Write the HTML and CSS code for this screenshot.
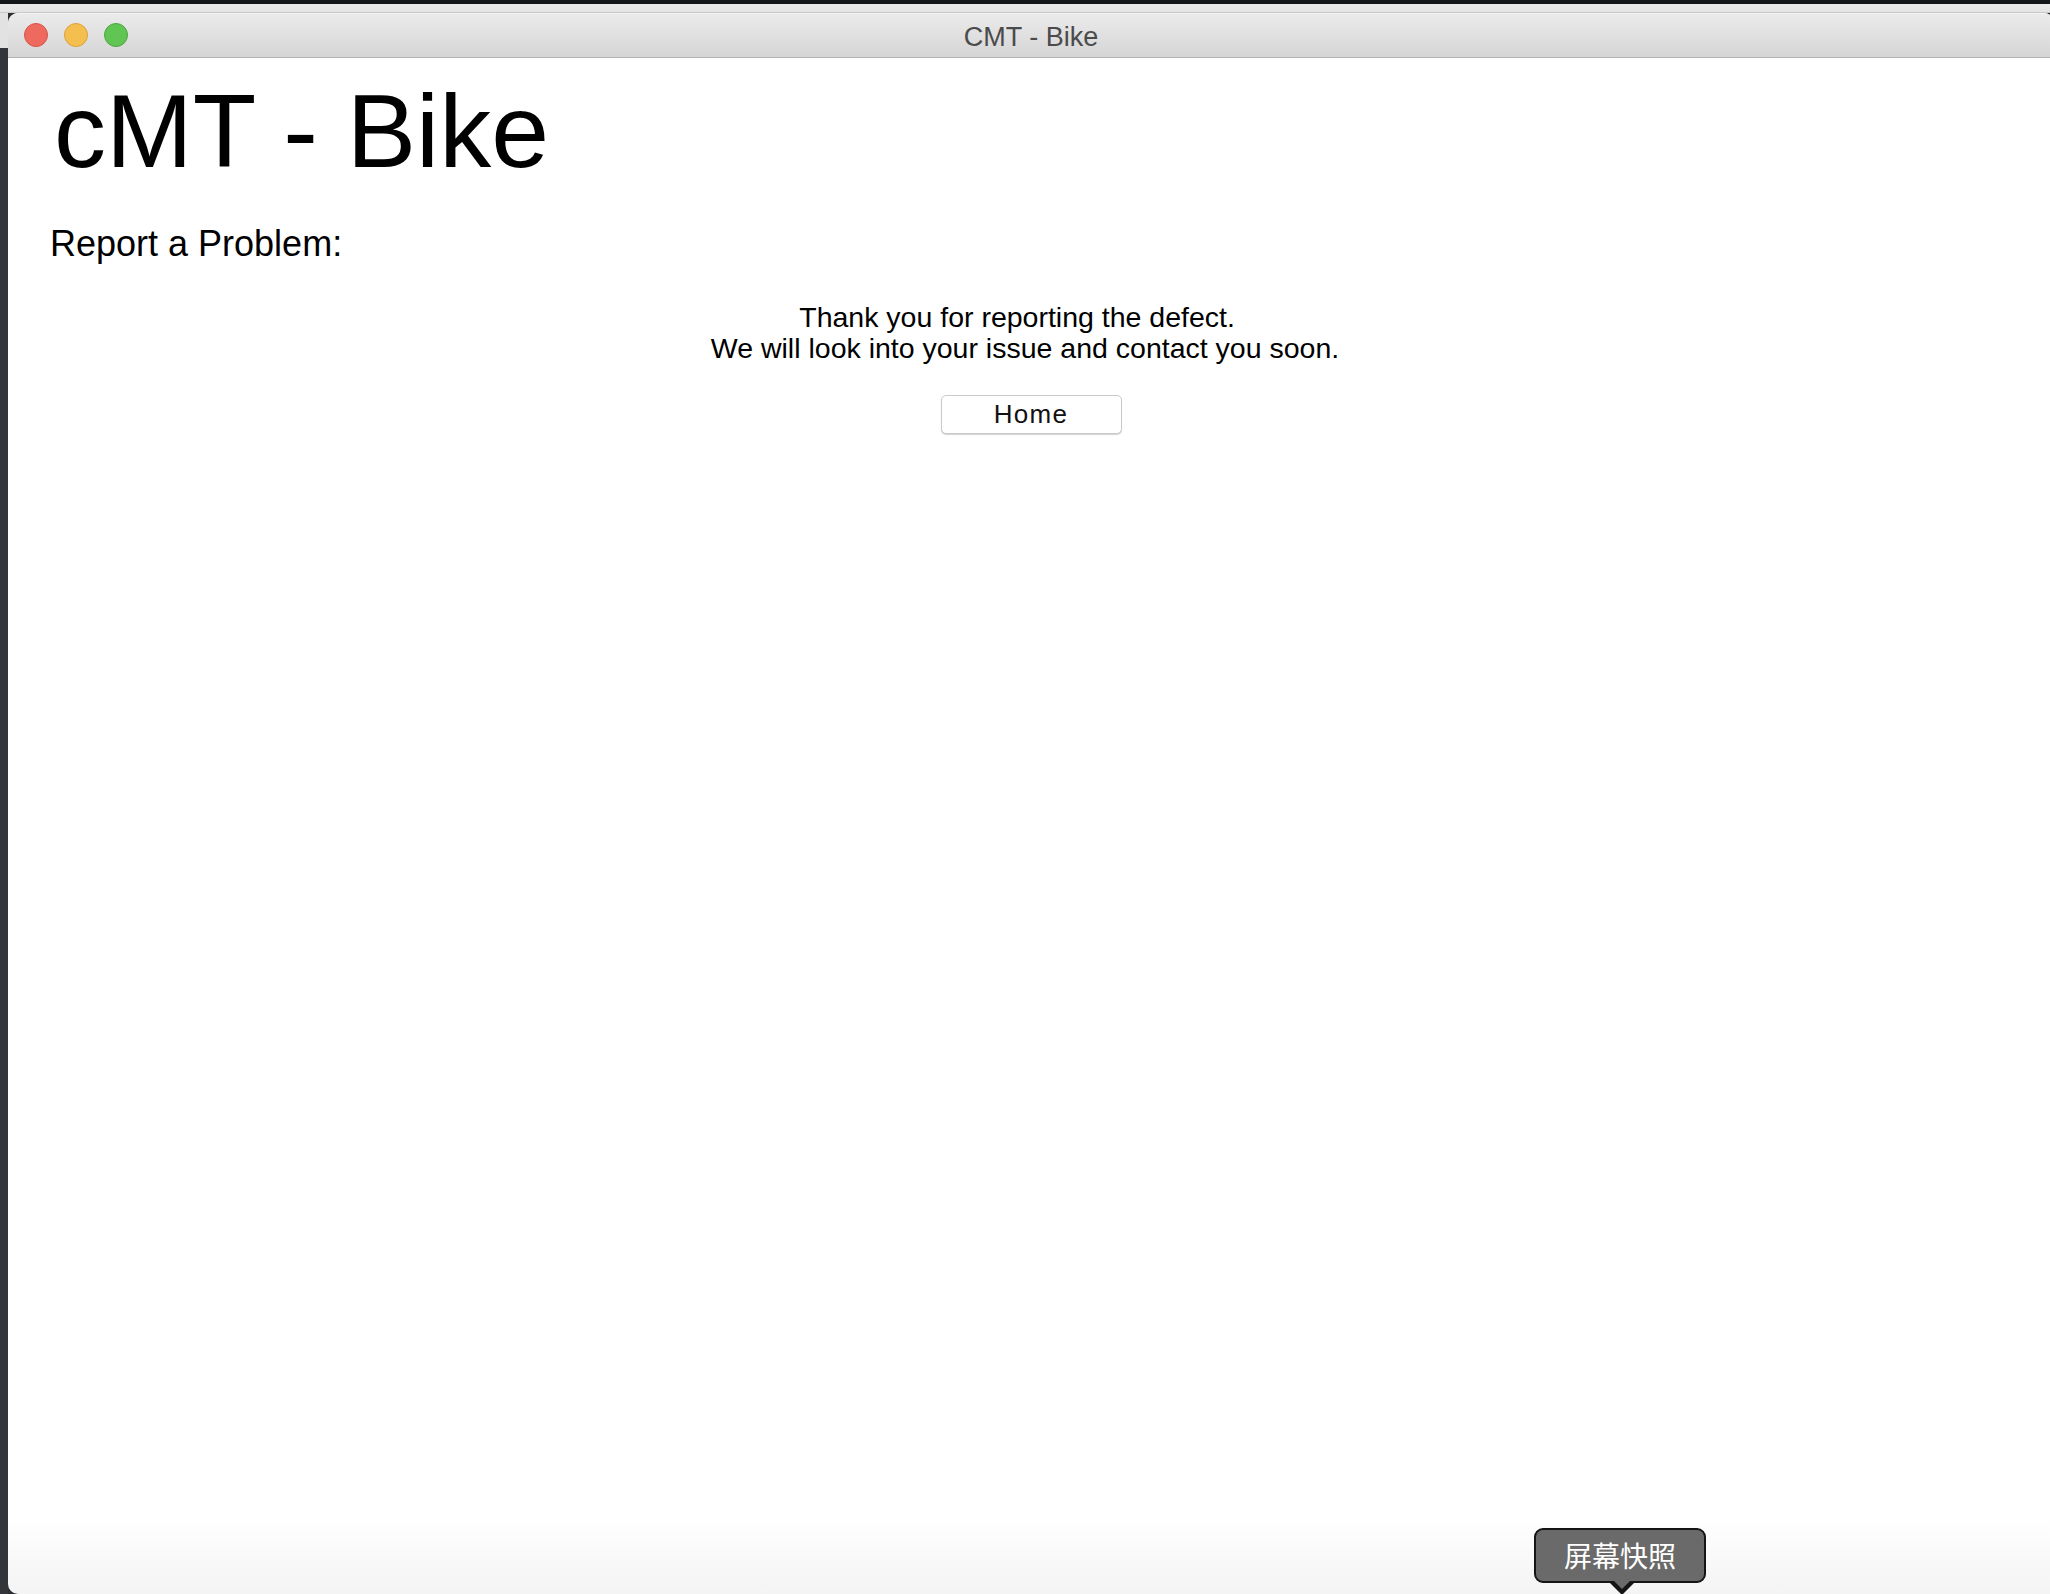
FILE: index.html
```html
<!DOCTYPE html>
<html lang="en">
<head>
<meta charset="utf-8">
<title>CMT - Bike</title>
<link rel="stylesheet" href="styles.css">
</head>
<body>
<div class="desk-top"></div>
<div class="desk-row">
  <div class="left-strip"></div>
  <div class="window">
    <div class="titlebar">
      <div class="lights">
        <span class="light red"></span>
        <span class="light yellow"></span>
        <span class="light green"></span>
      </div>
      <div class="title">CMT - Bike</div>
    </div>
    <div class="content">
      <h1 class="brand">cMT - Bike</h1>
      <h2 class="section">Report a Problem:</h2>
      <p class="message">Thank you for reporting the defect.&nbsp;&nbsp;<br>We will look into your issue and contact you soon.</p>
      <div class="actions"><button class="btn" type="button">Home</button></div>
    </div>
    <div class="bottom-fade"></div>
    <div class="tooltip">屏幕快照<span class="tip-arrow"></span></div>
  </div>
</div>
</body>
</html>
```
FILE: styles.css
```css
html, body {
  margin: 0;
  padding: 0;
  height: 100%;
  overflow: hidden;
}
body {
  background: #2d2e31;
  display: flex;
  flex-direction: column;
  font-family: "Liberation Sans", Arial, sans-serif;
}
.desk-top {
  height: 13px;
  flex: 0 0 13px;
  background: linear-gradient(#15161a 0, #15161a 4px, #e9e9e9 4px, #e4e4e4 12px, #c9c9c9 12px);
}
.desk-row {
  flex: 1;
  display: flex;
  min-height: 0;
}
.left-strip {
  width: 8px;
  flex: 0 0 8px;
  background: linear-gradient(#e2e2e2 0, #e2e2e2 35px, #34353a 35px);
}
.window {
  position: relative;
  flex: 0 0 2046px;
  background: #ffffff;
  border-radius: 10px 10px 0 10px;
  overflow: hidden;
  display: flex;
  flex-direction: column;
}
.titlebar {
  position: relative;
  height: 45px;
  flex: 0 0 45px;
  box-sizing: border-box;
  background: linear-gradient(#ebebeb, #d5d5d5);
  border-top: 1px solid #f4f4f4;
  border-bottom: 1px solid #b4b4b4;
  display: flex;
  align-items: center;
  justify-content: center;
}
.lights {
  position: absolute;
  left: 16px;
  top: 9px;
  display: flex;
  gap: 16px;
}
.light {
  width: 24px;
  height: 24px;
  border-radius: 50%;
  box-sizing: border-box;
}
.red { background: #ee6a5e; border: 1px solid #d65446; }
.yellow { background: #f5bf4f; border: 1px solid #d9a13c; }
.green { background: #61c554; border: 1px solid #4ea53f; }
.title {
  font-family: "Liberation Sans", Arial, sans-serif;
  font-size: 27px;
  color: #4b4b4b;
  margin-left: 0;
  margin-top: 3px;
}
.content {
  padding: 21px 0 0 46px;
  flex: 1;
}
.brand {
  margin: 0;
  font-weight: normal;
  font-size: 104px;
  line-height: 104px;
  color: #000;
}
.section {
  margin: 43px 0 0 -4px;
  font-weight: normal;
  font-size: 36px;
  line-height: 36px;
  color: #000;
}
.message {
  margin: 40px 0 0 -46px;
  padding-right: 12px;
  text-align: center;
  font-size: 28.5px;
  line-height: 31px;
  color: #000;
}
.actions {
  margin: 31px 0 0 -46px;
  display: flex;
  justify-content: center;
}
.btn {
  width: 181px;
  height: 39px;
  box-sizing: border-box;
  background: #ffffff;
  border: 1px solid #cacaca;
  border-radius: 5px;
  box-shadow: 0 1px 1px rgba(0,0,0,0.18);
  font-family: "Liberation Sans", Arial, sans-serif;
  font-size: 26px;
  letter-spacing: 1.3px;
  color: #111;
  padding: 0;
  margin-left: 0;
}
.bottom-fade {
  position: absolute;
  left: 0;
  right: 0;
  bottom: 0;
  height: 80px;
  background: linear-gradient(rgba(0,0,0,0), rgba(0,0,0,0.045));
  pointer-events: none;
}
.tooltip {
  position: absolute;
  left: 1526px;
  top: 1515px;
  width: 172px;
  height: 55px;
  box-sizing: border-box;
  background: #6a6a6a;
  border: 2px solid #151515;
  border-radius: 9px;
  color: #ffffff;
  font-family: "Noto Sans CJK SC", sans-serif;
  font-size: 28px;
  line-height: 50px;
  text-align: center;
  letter-spacing: 0;
}
.tip-arrow {
  position: absolute;
  left: 72px;
  bottom: -14px;
  width: 0;
  height: 0;
  border-left: 14px solid transparent;
  border-right: 14px solid transparent;
  border-top: 14px solid #151515;
}
.tip-arrow::after {
  content: "";
  position: absolute;
  left: -11px;
  top: -17px;
  border-left: 11px solid transparent;
  border-right: 11px solid transparent;
  border-top: 11px solid #6a6a6a;
}
```
